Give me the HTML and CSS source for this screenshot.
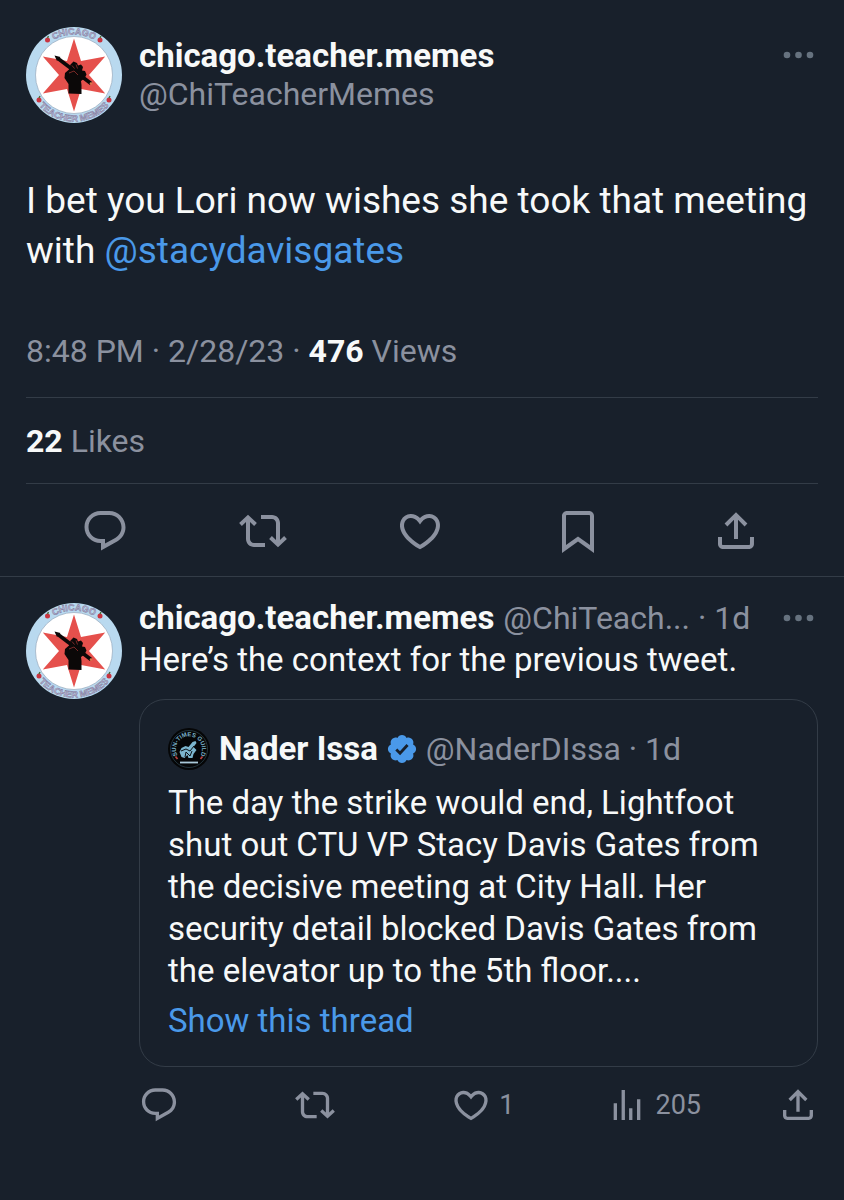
FILE: index.html
```html
<!DOCTYPE html>
<html lang="en">
<head>
  <meta charset="utf-8">
  <meta name="viewport" content="width=device-width, initial-scale=1">
  <title>chicago.teacher.memes</title>
  <link rel="stylesheet" href="styles.css">
</head>
<body>
  <!-- shared icons -->
  <svg class="sprite" aria-hidden="true">
    <symbol id="reply" viewBox="0 0 24 24"><path d="M1.751 10c0-4.42 3.584-8 8.005-8h4.366c4.49 0 8.129 3.64 8.129 8.13 0 2.96-1.607 5.68-4.196 7.11l-8.054 4.46v-3.69h-.067c-4.49.1-8.183-3.51-8.183-8.01zm8.005-6c-3.317 0-6.005 2.69-6.005 6 0 3.37 2.77 6.08 6.138 6.01l.351-.01h1.761v2.3l5.087-2.81c1.951-1.08 3.163-3.13 3.163-5.36 0-3.39-2.744-6.13-6.129-6.13H9.756z"/></symbol>
    <symbol id="retweet" viewBox="0 0 24 24"><path d="M4.5 3.88l4.432 4.14-1.364 1.46L5.5 7.55V16c0 1.1.896 2 2 2H13v2H7.5c-2.209 0-4-1.79-4-4V7.55L1.432 9.48.068 8.02 4.5 3.88zM16.5 6H11V4h5.5c2.209 0 4 1.79 4 4v8.45l2.068-1.93 1.364 1.46-4.432 4.14-4.432-4.14 1.364-1.46 2.068 1.93V8c0-1.1-.896-2-2-2z"/></symbol>
    <symbol id="heart" viewBox="0 0 24 24"><path d="M16.697 5.5c-1.222-.06-2.679.51-3.89 2.16l-.805 1.09-.806-1.09C9.984 6.01 8.526 5.44 7.304 5.5c-1.243.07-2.349.78-2.91 1.91-.552 1.12-.633 2.78.479 4.82 1.074 1.97 3.257 4.27 7.129 6.61 3.87-2.34 6.052-4.64 7.126-6.61 1.111-2.04 1.03-3.7.477-4.82-.561-1.13-1.666-1.84-2.908-1.91zm4.187 7.69c-1.351 2.48-4.001 5.12-8.379 7.67l-.503.3-.504-.3c-4.379-2.55-7.029-5.19-8.382-7.67-1.36-2.5-1.41-4.86-.514-6.67.887-1.79 2.647-2.91 4.601-3.01 1.651-.09 3.368.56 4.798 2.01 1.429-1.45 3.146-2.1 4.796-2.01 1.954.1 3.714 1.22 4.601 3.01.896 1.81.846 4.17-.514 6.67z"/></symbol>
    <symbol id="bookmark" viewBox="0 0 24 24"><path d="M4 4.5C4 3.12 5.119 2 6.5 2h11C18.881 2 20 3.12 20 4.5v18.44l-8-5.71-8 5.71V4.5zM6.5 4c-.276 0-.5.22-.5.5v14.56l6-4.29 6 4.29V4.5c0-.28-.224-.5-.5-.5h-11z"/></symbol>
    <symbol id="share" viewBox="0 0 24 24"><path d="M12 2.59l5.7 5.7-1.41 1.42L13 6.41V16h-2V6.41l-3.3 3.3-1.41-1.42L12 2.59zM21 15l-.02 3.51c0 1.38-1.12 2.49-2.5 2.49H5.5C4.11 21 3 19.88 3 18.5V15h2v3.5c0 .28.22.5.5.5h12.98c.28 0 .5-.22.5-.5L19 15h2z"/></symbol>
    <symbol id="views" viewBox="0 0 24 24"><path d="M8.75 21V3h2v18h-2zM18 21V8.5h2V21h-2zM4 21l.004-10h2L6 21H4zm9.248 0v-7h2v7h-2z"/></symbol>
    <symbol id="dots" viewBox="0 0 32 12"><circle cx="4" cy="6" r="3.3"/><circle cx="15.500" cy="6" r="3.300"/><circle cx="27" cy="6" r="3.3"/></symbol>
    <symbol id="avatar" viewBox="0 0 96 96">
      <circle cx="48" cy="48" r="48" fill="#b9d9ef"/>
      <circle cx="48" cy="48" r="38.500" fill="#fff" stroke="#8f9fb4" stroke-width=".6"/>
      <path d="M48 11.500 55 34.100 79.200 29.500 63 48 79.200 66.500 55 61.900 48 84.500 41 61.900 16.800 66.500 33 48 16.800 29.500 41 34.100z" fill="#e5504c"/>
      <path d="M32 31.500 65 56.500" stroke="#0b0808" stroke-width="3.600"/>
      <path d="M28.500 28.500l6 1.500-3.500 4z" fill="#0b0808"/>
      <path d="M42.500 66.500V57l-4-6 .5-5 4-3.500 1.500-5 3-3 3.500 1.500 1 2.500 3-1 2 2.500-1 3.500 3 .5 1.500 3.500-2 4-3.500 2.500.5 4v9z" fill="#0b0808"/>
      <path d="M46 38.500l2.500 3M50 37.500l1.500 4M43 46l5-2 4 4" stroke="#a83734" stroke-width=".7" fill="none"/>
      <circle cx="65" cy="56.500" r="1.300" fill="#d9774a"/>
      <path id="arc-top" d="M7.500 48a40.500 40.500 0 0 1 81 0" fill="none"/>
      <path id="arc-bottom" d="M1.500 48a46.500 46.500 0 0 0 93 0" fill="none"/>
      <g class="ring-text">
        <text><textPath href="#arc-top" startOffset="50%">CHICAGO</textPath></text>
        <text><textPath href="#arc-bottom" startOffset="50%">TEACHER MEMES</textPath></text>
      </g>
      <g fill="#c93440"><circle cx="21.500" cy="13" r="2.500"/><circle cx="74" cy="13" r="2.500"/><circle cx="13" cy="73" r="2.500"/><circle cx="83" cy="73" r="2.500"/></g>
      <path d="M21.500 11l1-2M74 11l1-2M13 71l1-2M83 71l1-2" stroke="#4c6b35" stroke-width="1.400"/>
    </symbol>
  </svg>

  <main>
    <article class="tweet tweet-main">
      <header class="author">
        <svg class="avatar" role="img" aria-label="chicago.teacher.memes"><use href="#avatar"/></svg>
        <div class="names">
          <a href="#" class="name">chicago.teacher.memes</a>
          <a href="#" class="handle">@ChiTeacherMemes</a>
        </div>
        <button class="more" aria-label="More"><svg><use href="#dots"/></svg></button>
      </header>
      <p class="main-text">I bet you Lori now wishes she took that meeting with <a href="#">@stacydavisgates</a></p>
      <p class="meta">8:48 PM · 2/28/23 · <strong>476</strong> Views</p>
      <p class="likes"><strong>22</strong> Likes</p>
      <div class="actions">
        <button aria-label="Reply"><svg><use href="#reply"/></svg></button>
        <button aria-label="Retweet"><svg><use href="#retweet"/></svg></button>
        <button aria-label="Like"><svg><use href="#heart"/></svg></button>
        <button aria-label="Bookmark"><svg><use href="#bookmark"/></svg></button>
        <button aria-label="Share"><svg><use href="#share"/></svg></button>
      </div>
    </article>

    <article class="tweet tweet-reply">
      <svg class="avatar" role="img" aria-label="chicago.teacher.memes"><use href="#avatar"/></svg>
      <div class="content">
        <header class="byline">
          <a href="#" class="name">chicago.teacher.memes</a>
          <span class="handle">@ChiTeach... · 1d</span>
          <button class="more" aria-label="More"><svg><use href="#dots"/></svg></button>
        </header>
        <p>Here’s the context for the previous tweet.</p>

        <section class="quote">
          <header class="byline">
            <svg class="quote-avatar" viewBox="0 0 42 42" role="img" aria-label="Sun-Times Guild">
              <circle cx="21" cy="21" r="21" fill="#050607"/>
              <circle cx="21" cy="21" r="18.500" fill="none" stroke="#36515e" stroke-width=".6"/>
              <path id="guild-arc" d="M10.500 29a13 13 0 1 1 21 0" fill="none"/>
              <text class="guild-text"><textPath href="#guild-arc" startOffset="50%">SUN-TIMES GUILD</textPath></text>
              <path d="M11.500 24l2-4 4-2 3 1 4-5 3-1 1 2-3 4 3 3-3 4-1 4h-4l-1-3-3 3-3-1z" fill="#7cb5cd"/>
              <path d="M13 23l5-2 4 2 4-5M17 29l1-5 4 4 2-5" stroke="#0b1116" fill="none"/>
              <path d="M12 34.500h18" stroke="#a9c8d8" stroke-width="1.800"/>
              <path d="M7.500 28.500l2 2.500M34.500 28.500l-2 2.500" stroke="#b7413e" stroke-width="1.800"/>
            </svg>
            <a href="#" class="name">Nader Issa</a>
            <svg class="verified" viewBox="1 1 20 20" role="img" aria-label="Verified">
              <path fill="#4a99e9" d="M20.396 11c-.018-.646-.215-1.275-.57-1.816-.354-.54-.852-.972-1.438-1.246.223-.607.27-1.264.14-1.897-.131-.634-.437-1.218-.882-1.687-.47-.445-1.053-.75-1.687-.882-.633-.13-1.29-.083-1.897.14-.273-.587-.704-1.086-1.245-1.44S11.647 1.62 11 1.604c-.646.017-1.273.213-1.813.568s-.969.854-1.24 1.44c-.608-.223-1.267-.272-1.902-.14-.635.13-1.22.436-1.69.882-.445.47-.749 1.055-.878 1.688-.13.633-.08 1.29.144 1.896-.587.274-1.087.705-1.443 1.245-.356.54-.555 1.17-.574 1.817.02.647.218 1.276.574 1.817.356.54.856.972 1.443 1.245-.224.606-.274 1.263-.144 1.896.13.634.433 1.218.877 1.688.47.443 1.054.747 1.687.878.633.132 1.29.084 1.897-.136.274.586.705 1.084 1.246 1.439.54.354 1.17.551 1.816.569.647-.016 1.276-.213 1.817-.567s.972-.854 1.245-1.44c.604.239 1.266.296 1.903.164.636-.132 1.22-.447 1.68-.907.46-.46.776-1.044.908-1.681s.075-1.299-.165-1.903c.586-.274 1.084-.705 1.439-1.246.354-.54.551-1.17.569-1.816z"/>
              <path d="M7.200 11.300l2.500 2.500 5-5.500" fill="none" stroke="#18202b" stroke-width="1.900"/>
            </svg>
            <span class="handle">@NaderDIssa · 1d</span>
          </header>
          <p class="quote-text">The day the strike would end, Lightfoot shut out CTU VP Stacy Davis Gates from the decisive meeting at City Hall. Her security detail blocked Davis Gates from the elevator up to the 5th floor....</p>
          <a href="#" class="thread">Show this thread</a>
        </section>

        <div class="actions actions-small">
          <button aria-label="Reply"><svg><use href="#reply"/></svg></button>
          <button aria-label="Retweet"><svg><use href="#retweet"/></svg></button>
          <button aria-label="1 like"><svg><use href="#heart"/></svg>1</button>
          <button aria-label="205 views"><svg><use href="#views"/></svg>205</button>
          <button aria-label="Share"><svg><use href="#share"/></svg></button>
        </div>
      </div>
    </article>
  </main>
</body>
</html>
```
FILE: styles.css
```css
* {
  box-sizing: border-box;
}

body {
  margin: 0;
  background-color: #18202b;
  color: #f7f9f9;
  font-family: Roboto, "Liberation Sans", sans-serif;
  font-size: 33px;
  line-height: 42px;
}

p {
  margin: 0;
}

a {
  color: #4a99e9;
  text-decoration: none;
}

button {
  padding: 0;
  border: none;
  background: none;
  color: #8b98a5;
  font: inherit;
  cursor: pointer;
}

svg {
  display: block;
  flex-shrink: 0;
  fill: currentColor;
}

.sprite {
  position: absolute;
  width: 0;
  height: 0;
}

.avatar {
  width: 96px;
  height: 96px;
}

.ring-text {
  font-family: "Liberation Sans", sans-serif;
  font-size: 9px;
  font-weight: bold;
  text-anchor: middle;
  fill: #c3bedb;
  stroke: #7c7899;
  stroke-width: 0.5px;
}

.name {
  color: #f7f9f9;
  font-weight: bold;
}

.handle,
.meta,
.likes {
  color: #8b919f;
  font-size: 32px;
}

.more {
  margin-left: auto;
  padding-right: 3px;
  color: #66727f;
}

.more svg {
  width: 32px;
  height: 12px;
}

.tweet-main {
  padding: 27px 26px 0;
  border-bottom: 1px solid #333c47;
}

.author {
  display: flex;
  align-items: flex-start;
  gap: 17px;
}

.author .more {
  margin-top: 22px;
}

.names {
  display: flex;
  flex-direction: column;
  padding-top: 9px;
  line-height: 39px;
}

.main-text {
  margin-top: 53px;
  font-size: 37px;
  line-height: 50px;
}

.meta {
  margin-top: 54px;
  padding-bottom: 25px;
  border-bottom: 1px solid #333c47;
}

.likes {
  padding: 22px 0 21px;
  border-bottom: 1px solid #333c47;
}

.meta strong,
.likes strong {
  color: #f7f9f9;
}

.actions {
  display: flex;
  justify-content: space-around;
  padding: 23px 3px 21px 0;
  color: #8b919f;
}

.actions button {
  color: inherit;
}

.actions svg {
  width: 48px;
  height: 48px;
}

.tweet-reply {
  display: flex;
  gap: 17px;
  padding: 20px 26px;
}

.tweet-reply > .avatar {
  margin-top: 6px;
}

.content {
  flex: 1;
  min-width: 0;
}

.byline {
  display: flex;
  align-items: center;
  gap: 9px;
  white-space: nowrap;
}

.quote {
  margin-top: 18px;
  padding: 28px 28px 24px;
  border: 1px solid #333c47;
  border-radius: 26px;
}

.quote-avatar {
  width: 42px;
  height: 42px;
}

.guild-text {
  font-family: "Liberation Sans", sans-serif;
  font-size: 6px;
  font-weight: bold;
  text-anchor: middle;
  fill: #7cb5cd;
}

.verified {
  width: 30px;
  height: 30px;
}

.quote-text {
  margin: 12px 0 8px;
}

.thread {
  display: block;
}

.actions-small {
  display: grid;
  grid-template-columns: repeat(4, 23%) 1fr;
  padding: 17px 0 0;
  font-size: 27px;
}

.actions-small button {
  display: flex;
  align-items: center;
  gap: 8px;
}

.actions-small button:last-child {
  justify-self: end;
}

.actions-small svg {
  width: 40px;
  height: 40px;
}
```
